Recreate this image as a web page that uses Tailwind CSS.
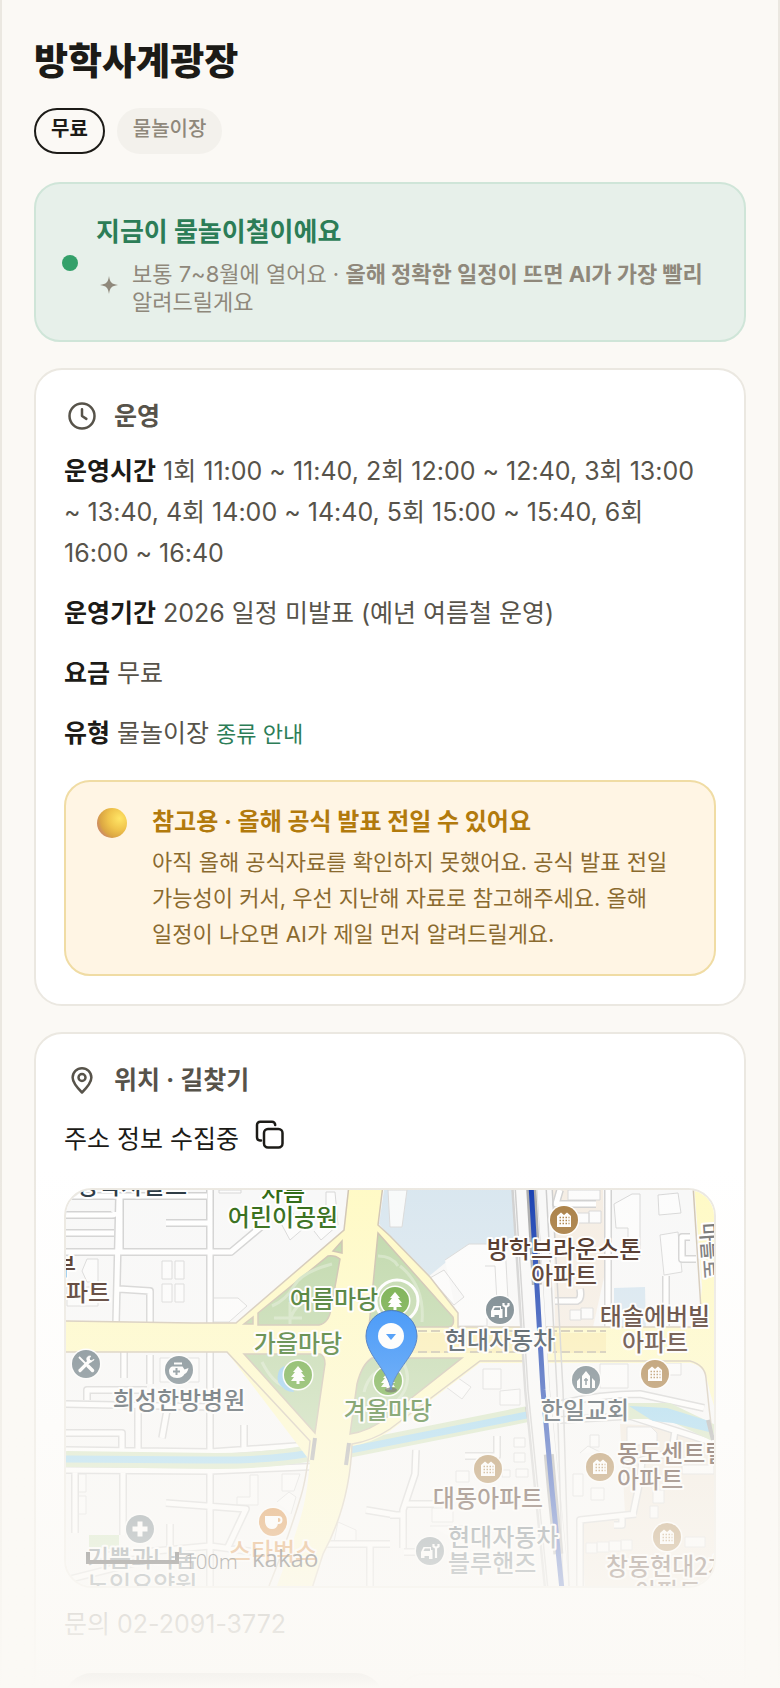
<!DOCTYPE html>
<html lang="ko">
<head>
    <meta charset="utf-8"/>
    <meta content="width=device-width, initial-scale=1.0" name="viewport"/>
    <title>방학사계광장</title>
    <script src="https://cdn.jsdelivr.net/npm/@tailwindcss/browser@4"></script>
</head>
<body class="bg-[#fbf9f5] font-['Inter','Noto_Sans_CJK_KR',sans-serif] text-[25px] text-[#1c1b17] break-keep">
    <div class="relative h-screen overflow-hidden">
        <main class="min-h-screen border-x-2 border-[#ebe8e1] px-8 pt-9">
            <h1 class="text-[37px] leading-[52px] font-extrabold">방학사계광장</h1>
            <div class="mt-5 flex gap-3 text-xl">
                <span class="rounded-full border-2 border-[#1c1b17] px-[15px] pt-1 pb-2 leading-[30px] font-bold">무료</span>
                <span class="rounded-full border-2 border-[#f3f1ec] bg-[#f3f1ec] px-3.5 pt-1 pb-2 leading-[30px] font-medium text-[#8f887b]">물놀이장</span>
            </div>

            <!-- 시즌 안내 -->
            <section class="mt-7 flex items-center gap-[18px] rounded-[26px] border-2 border-[#cfe5d8] bg-[#e7f0ea] px-[26px] pt-[25px] pb-6">
                <span class="size-4 shrink-0 rounded-full bg-[#34a06a]"></span>
                <div>
                    <h2 class="text-[26px] leading-[46px] font-bold text-[#2c7d57]">지금이 물놀이철이에요</h2>
                    <div class="mt-[5px] flex items-center gap-2.5 text-[22px] leading-7 text-[#8f887b]">
                        <svg class="mb-1.5 w-[26px] shrink-0" viewBox="0 0 26 26" fill="currentColor"><path d="M13 4c1 6.500 2.500 8 9 9-6.500 1-8 2.500-9 9-1-6.500-2.500-8-9-9 6.500-1 8-2.500 9-9z"/></svg>
                        <p>보통 7~8월에 열어요 · <b>올해 정확한 일정이 뜨면 AI가 가장 빨리</b> 알려드릴게요</p>
                    </div>
                </div>
            </section>

            <!-- 운영 -->
            <section class="mt-[26px] rounded-[28px] border-2 border-[#ebe8e1] bg-white p-7">
                <h2 class="flex items-center gap-3.5 leading-9 font-bold text-[#57534a]">
                    <svg class="mx-[3px] size-[30px]" viewBox="0 0 24 24" fill="none" stroke="currentColor" stroke-width="2" stroke-linecap="round" stroke-linejoin="round"><circle cx="12" cy="12" r="10"/><path d="M12 6.500V12l3.500 2.300"/></svg>
                    운영
                </h2>
                <div class="mt-[17px] flex flex-col gap-[19px] pr-3 leading-[41px] text-[#57534a]">
                    <p><b class="text-[#1c1b17]">운영시간</b> 1회 11:00 ~ 11:40, 2회 12:00 ~ 12:40, 3회 13:00 ~ 13:40, 4회 14:00 ~ 14:40, 5회 15:00 ~ 15:40, 6회 16:00 ~ 16:40</p>
                    <p><b class="text-[#1c1b17]">운영기간</b> 2026 일정 미발표 (예년 여름철 운영)</p>
                    <p><b class="text-[#1c1b17]">요금</b> 무료</p>
                    <p><b class="text-[#1c1b17]">유형</b> 물놀이장 <a href="#" class="text-[22px] text-[#2c7d57]">종류 안내</a></p>
                </div>
                <div class="mt-[25px] flex gap-[22px] rounded-[26px] border-2 border-[#f0dca4] bg-[#fff5e4] px-7 pt-5 pb-[22px]">
                    <svg class="mt-[3px] size-9 shrink-0" viewBox="0 0 36 36">
                        <defs><radialGradient id="ball" cx="0.75" cy="0.35" r="0.75"><stop offset="0" stop-color="#ffe566"/><stop offset="0.500" stop-color="#f0c44c"/><stop offset="0.850" stop-color="#dba643"/><stop offset="1" stop-color="#cf8f60"/></radialGradient></defs>
                        <circle cx="18" cy="18" r="15" fill="url(#ball)"/>
                    </svg>
                    <div>
                        <h3 class="text-2xl leading-10 font-bold text-[#b27a0c]">참고용 · 올해 공식 발표 전일 수 있어요</h3>
                        <p class="mt-0.5 text-[22px] leading-9 text-[#8a6a2f]">아직 올해 공식자료를 확인하지 못했어요. 공식 발표 전일 가능성이 커서, 우선 지난해 자료로 참고해주세요. 올해 일정이 나오면 AI가 제일 먼저 알려드릴게요.</p>
                    </div>
                </div>
            </section>

            <!-- 위치 -->
            <section class="mt-[26px] rounded-[28px] border-2 border-[#ebe8e1] bg-white p-7">
                <h2 class="flex items-center gap-3.5 leading-9 font-bold text-[#57534a]">
                    <svg class="mx-[3px] size-[30px]" viewBox="0 0 24 24" fill="none" stroke="currentColor" stroke-width="2" stroke-linecap="round" stroke-linejoin="round"><path d="M12 22c4.500-4.500 7.500-8 7.500-12a7.500 7.500 0 0 0-15 0c0 4 3 7.500 7.500 12z"/><circle cx="12" cy="10" r="2.800"/></svg>
                    위치 · 길찾기
                </h2>
                <div class="mt-4 flex items-center gap-4">
                    <p class="leading-[50px]">주소 정보 수집중</p>
                    <button type="button" aria-label="주소 복사" class="mb-2">
                        <svg class="size-[30px]" viewBox="0 0 30 30" fill="none" stroke="currentColor" stroke-width="2.500" stroke-linecap="round" stroke-linejoin="round"><rect x="9" y="9" width="18.500" height="18.500" rx="4"/><path d="M6 20.500H5a3.200 3.200 0 0 1-3-3.200V5a3.200 3.200 0 0 1 3.200-3.200H17A3.200 3.200 0 0 1 20.200 5"/></svg>
                    </button>
                </div>

                <div class="mt-6 overflow-hidden rounded-[28px] border-2 border-[#ebe8e1]">
                    <svg class="block w-full" viewBox="66 1190 648 396" font-family="Noto Sans CJK KR, sans-serif" font-size="24" font-weight="500">
                        <defs>
                            <g id="tree"><circle r="15.500" fill="#fff"/><circle r="14" fill="#5fa22f"/><path d="M0-9l5 6H3l4 5H4l3 4H1.500v3h-3V6H-7l3-4h-3l4-5h-2z" fill="#fff"/></g>
                            <g id="apt"><circle r="15.500" fill="#fff"/><circle r="14" fill="#a67a3e"/><path d="M-7 7V-4l4-3.500 3 2.500 3-2.500L7-4V7z" fill="#fff"/><path d="M-4.500-2.500h10M-4.500.5h10M-4.500 3.500h10" stroke="#a67a3e" stroke-width="1.500" stroke-dasharray="1.500 1.500"/></g>
                            <g id="car"><circle r="15.500" fill="#fff"/><circle r="14" fill="#60727b"/><path d="M-9 7V1l2.500-5H1v3h1.500v9H-1V5h-4.500v2z" fill="#fff"/><path d="M-6.500 0l1.300-2.500H0V0z" fill="#60727b"/><path d="M6 7V-3M3.500-7v2.500L6-3l2.500-1.500V-7" fill="none" stroke="#fff" stroke-width="2.200"/></g>
                        </defs>
                        <rect x="66" y="1190" width="648" height="396" fill="#f8f8f8"/>

                        <!-- water and apartment blocks -->
                        <path d="M384 1190H512L515 1243 467 1245 428 1277 390 1237 379 1224z" fill="#d8e6ef"/>
                        <path d="M388 1190h19l-5 37h-12z" fill="#f8fafa" stroke="#d8d8d8"/>
                        <path d="M553 1190h50l2 83-12 54h-38z" fill="#f5ede3"/>
                        <path d="M614 1288l31-1 1 42h-32z" fill="#d5e5f0"/>
                        <path d="M620 1424l40 2 56 22v140H585l-5-70 45-5z" fill="#f1e8dc"/>
                        <path d="M89 1535h30v14H89z" fill="#c6e0b2"/>

                        <!-- buildings -->
                        <g fill="#fcfcfc" stroke="#d6d6d6">
                            <path d="M162 1261h10v18h-10zM175 1261h9v18h-9zM162 1284h10v18h-10zM175 1284h9v18h-9zM82 1271l5-12h11v23H87zM67 1287h31v19H67zM213 1298h25l9 8-18 16h-16zM219 1190h22v3h-22zM276 1214l14 26 14-12-12-16M314 1231l7 9 17-15-3-33h-9v32M160 1358h39v24h-39z"/>
                            <path d="M444 1270l-14 8 24 27 10-8zM445 1260l24-16h36l4 74h-22v8h-28M485 1266h10l3 54M658 1195l20-2 3 20-22 2zM660 1235l18-3 4 40-18 3zM614 1204l18-10h8v62h-12v-28h-12zM568 1190h32v10h-32zM574 1213h15v10h-15zM589 1211h12v12h-12zM570 1310h11v10h-11zM581 1308h12v11h-12zM483 1369h18v20h-18zM451 1373l20 14-9 12-20-15zM500 1391l20-2v16h-20zM600 1364h28v24h-28zM661 1363h20v12h-20z"/>
                            <path d="M76 1474h10v18H76zM76 1496h10v18H76zM250 1475h8v30h-21v-8h13zM282 1474h18l-6 17h-12zM277 1502l12-10 7 5-5 17M338 1522l18 8v12h-22zM432 1508h21v14h-21zM430 1526h34v18M514 1438h11v9h-11zM514 1453h11v9h-11zM516 1469h12v8h-12zM456 1471h13v11h-13zM502 1470h8v7h-8z"/>
                            <path d="M590 1435h9v12h-9zM580 1453l8-7 12 6M573 1474h10v22h-10zM591 1488h13v12h-13zM627 1427h24l6 6v12h-30zM653 1490h11v13h-11zM650 1506h8v12h-8zM586 1543h11v10h-11zM597 1542h12v10h-12zM609 1541h12v10h-12zM621 1540h11v10h-11zM685 1537h20v10h-20zM682 1465h32v9h-32z"/>
                        </g>

                        <!-- side streets: casing, then fill -->
                        <g fill="none" stroke-linejoin="round">
                            <g stroke="#d0d0d0" stroke-width="8"><path id="st" d="M66 1196H207M66 1215h46q3 0 3-3M66 1233h48M66 1252H231L262 1226M210 1190V1324M119 1196L116 1324M119 1289l31 2v33M166 1223h42M120 1198V1250M150 1355v29M124 1352v26M66 1404l146 3M87 1400v-10h60M138 1407v42M167 1410l-5 28M244 1425v25M66 1433h56v17M210 1352V1586M66 1450l144 2 100-7M66 1470l144 1 117-5M75 1471v62M123 1471v64M166 1503l80 6-18 38M170 1524v22M100 1556l110-10 60 8M66 1580l80-20M324 1544h66M366 1510l30 5M370 1544v42M514 1418L350 1452M416 1450l-1 24-12 36v38M390 1515h15M407 1504h27M465 1456h32v-20M404 1552h36M608 1190v138M666 1276v50M555 1301h22q5-2 3-12M690 1237h-8v22h14M560 1190l-4 14h40M560 1420l70-4 84 27M675 1430l-3 22-30 8-2 20-7 34M580 1586v-66l56-6M622 1515v10h-8M560 1404q40-10 80-10l64 14"/></g>
                            <g stroke="#fff" stroke-width="5"><use href="#st"/></g>
                        </g>

                        <!-- stream -->
                        <path d="M66 1459l150 2q50 0 96-8M348 1450L528 1414M628 1411h40l46 22" fill="none" stroke="#d3e4bf" stroke-width="16"/>
                        <path d="M66 1459l140 1q60 1 105-7M350 1450L527 1415" fill="none" stroke="#9dd6f0" stroke-width="7"/>
                        <path d="M629 1406l38 2 42 13v11l-36-9-20-2z" fill="#9dd6f0"/>

                        <!-- main roads -->
                        <path d="M60 1321l133 2h43L344 1230l5-45h34l-5 40 12 11 40 41 28 36v14h240l4-40-8-104h34v260q-14-32-21-63-1-13-16-17H480l-90 68q-18 12-38 15-2 60-29 110l-16 50h-38q20-50 32-90 6-20 9-55L227 1352H60z" fill="#fffac4"/>
                        <path d="M60 1321l133 2h43L344 1230l5-45M383 1185l-5 40 12 11 40 41 28 36v14h240l4-2-9-140M713 1440q-4-30-7-62-1-13-16-17H480l-90 68q-18 12-38 15-2 60-29 110l-16 50M269 1586q20-50 32-90 6-20 9-55L227 1352H60" fill="none" stroke="#cfc3b0" stroke-width="1.500"/>

                        <!-- plaza lawns -->
                        <g fill="#bcd6a6" stroke="#c9bda9" stroke-width="1.500">
                            <path d="M328 1256q7-1 12 3l-9 50q-2 14-12 16h-61v-12zM342 1241l-9 10 9 2zM253 1317l-9 7h9z"/>
                            <path d="M378 1233l75 84q2 9-4 10h-80z"/>
                            <path d="M244 1354h76q5 2 5 10l-10 69z"/>
                            <path d="M372 1358h90l-76 60q-16 13-36 16l7-50q5-20 15-26z"/>
                        </g>
                        <g fill="none" stroke="#d0e2c0" stroke-width="3"><path d="M332 1264q-30 8-38 22t-22 20M328 1300q-30-6-38 20M262 1362q20 40 48 16M400 1266q25 20 22 56M378 1256q14 0 20 10M364 1392q6-24 28-24M404 1364q10 20-8 38M290 1324v-22M274 1318h28"/></g>
                        <path d="M400 1333h206v20H400z" fill="#fbeeb0"/>
                        <path d="M418 1331h188M418 1352h188" stroke="#c9c0a6" stroke-width="2" stroke-dasharray="9 4"/>
                        <path d="M315 1438l-3 22M349 1443l-3 22M527 1407l3 18M708 1420l5 20" stroke="#a8a8a8" stroke-width="4"/>

                        <!-- railway -->
                        <path d="M524 1185l13 205 10 100 10 100" fill="none" stroke="#cfcfcf" stroke-width="26"/>
                        <path d="M525 1185l13 205 10 100 10 100" fill="none" stroke="#f9f9f9" stroke-width="23"/>
                        <path d="M515 1185l13 205 10 100 10 100M546 1185l11 205 6 200M552 1185l11 205 6 200" fill="none" stroke="#ccc" stroke-width="1.500"/>
                        <path d="M531 1185l12 205 9 100 10 100" fill="none" stroke="#a9a9a9" stroke-width="10" stroke-dasharray="100 170"/>
                        <path d="M531 1185l12 205 9 100 10 100" fill="none" stroke="#123bb0" stroke-width="5"/>

                        <!-- places -->
                        <circle cx="397" cy="1301" r="21" fill="none" stroke="#fff" stroke-width="3"/>
                        <path d="M284 1366q-8 4-6 16 6 10 16 10" fill="#8fcaf0"/>
                        <use href="#tree" x="395" y="1301"/><use href="#tree" x="298" y="1375"/><use href="#tree" x="388" y="1381"/>
                        <use href="#apt" x="564" y="1220"/><use href="#apt" x="655" y="1374"/><use href="#apt" x="488" y="1469"/><use href="#apt" x="600" y="1467"/><use href="#apt" x="667" y="1537"/>
                        <use href="#car" x="500" y="1310"/><use href="#car" x="430" y="1551"/>
                        <g transform="translate(86 1364)"><circle r="15.500" fill="#fff"/><circle r="14" fill="#60727b"/><path d="M-6 6.500L3-2.500" stroke="#fff" stroke-width="3.200" stroke-linecap="round"/><path d="M8-4.500L5-3 3-5l1.500-3Q0-8 1-3.500q3 4 7-1z" fill="#fff" stroke="#fff"/><path d="M-7-7l7 7" stroke="#fff" stroke-width="1.800"/><path d="M2 2l4.500 4.500" stroke="#fff" stroke-width="3.500" stroke-linecap="round"/></g>
                        <g transform="translate(179 1370)"><circle r="15.500" fill="#fff"/><circle r="14" fill="#60727b"/><path d="M-5-6.500H3" stroke="#fff" stroke-width="2"/><path d="M-7-3.500H3.500l2 3 4-1.500q-1 5-4 6-2 4-7.500 4-8 0-8-7 0-3 3-4.500z" fill="#fff"/><path d="M-2.500-2v7M-6 1.500h7" stroke="#60727b" stroke-width="2"/></g>
                        <g transform="translate(586 1380)"><circle r="15.500" fill="#fff"/><circle r="14" fill="#60727b"/><path d="M-4 8V-4l4-5 4 5V8zM-9 8V1l3-3v10zM9 8V1L6-2v10z" fill="#fff"/><path d="M0-2v7M-2 0h4" stroke="#60727b" stroke-width="1.500"/></g>
                        <g transform="translate(140 1529)"><circle r="15.500" fill="#fff"/><circle r="14" fill="#60727b"/><path d="M0-7.500V7.500M-7.500 0H7.500" stroke="#fff" stroke-width="5"/></g>
                        <g transform="translate(273 1522)"><circle r="15.500" fill="#fff"/><circle r="14" fill="#d37416"/><path d="M-8-6H5V0q0 7-6 7t-7-7z" fill="#fff"/><circle cx="5.500" cy="-2" r="3" fill="none" stroke="#fff" stroke-width="2"/></g>

                        <!-- labels -->
                        <g text-anchor="middle" stroke="#fff" stroke-width="4" stroke-linejoin="round" paint-order="stroke">
                            <g fill="#26343e"><text x="132" y="1194">방학사랄트</text></g>
                            <g fill="#29650c"><text x="283" y="1201">차름</text><text x="283" y="1226">어린이공원</text><text x="334" y="1308">여름마당</text><text x="298" y="1352">가을마당</text><text x="388" y="1419">겨울마당</text></g>
                            <g fill="#3c1d10"><text x="564" y="1258">방학브라운스톤</text><text x="564" y="1284">아파트</text><text x="655" y="1325">태솔에버빌</text><text x="655" y="1351">아파트</text><text x="488" y="1507">대동아파트</text><text x="668" y="1575">창동현대2차</text><text x="668" y="1600">아파트</text></g>
                            <g fill="#3c1d10" text-anchor="start"><text x="54" y="1275">부</text><text x="66" y="1301">파트</text><text x="617" y="1462">동도센트럴</text><text x="617" y="1488">아파트</text></g>
                            <g fill="#26343e"><text x="500" y="1349">현대자동차</text><text x="179" y="1409">희성한방병원</text><text x="585" y="1419">한일교회</text></g>
                            <g fill="#4d5c66" text-anchor="start"><text x="448" y="1546">현대자동차</text><text x="448" y="1572">블루핸즈</text><text x="87" y="1567">기쁨과나눔</text><text x="87" y="1593">노인요양원</text></g>
                            <text x="273" y="1560" fill="#d37416">스타벅스</text>
                            <text x="702" y="1251" transform="rotate(86 702 1251)" fill="#6c6c6c" font-size="20">마들로</text>
                        </g>

                        <!-- scale and logo -->
                        <path d="M88 1552v10h89v-10" fill="none" stroke="#000" stroke-width="4"/>
                        <text x="184" y="1569" font-family="Roboto" font-weight="300" font-size="21">100m</text>
                        <text x="252" y="1567" font-family="Open Sans" font-weight="500" font-size="24">kakao</text>

                        <!-- marker -->
                        <ellipse cx="391" cy="1390" rx="6" ry="2.500" fill="#222" opacity="0.700"/>
                        <path d="M391 1390c-3-20-25-35-25-54a25 25 0 0 1 51 0c0 19-23 34-26 54z" fill="#0b79f9" stroke="#0a4cb0"/>
                        <circle cx="391" cy="1336" r="13" fill="#fff"/>
                        <path d="M386 1334h10l-5 6z" fill="#0b79f9"/>
                    </svg>
                </div>

                <p class="mt-4 leading-[41px] text-[#57534a]">문의 02-2091-3772</p>
                <div class="mt-7 grid grid-cols-2 gap-3">
                    <button type="button" aria-label="길찾기" class="h-20 rounded-[28px] bg-[#1c1b17]"></button>
                    <button type="button" aria-label="지도 보기" class="h-20 rounded-[28px] border-2 border-[#ddd9cf] bg-white"></button>
                </div>
            </section>
        </main>
        <div class="pointer-events-none absolute inset-x-0 bottom-0 h-[520px] bg-linear-to-b from-[#fbf9f5]/0 to-[#fbf9f5]"></div>
    </div>
</body>
</html>
